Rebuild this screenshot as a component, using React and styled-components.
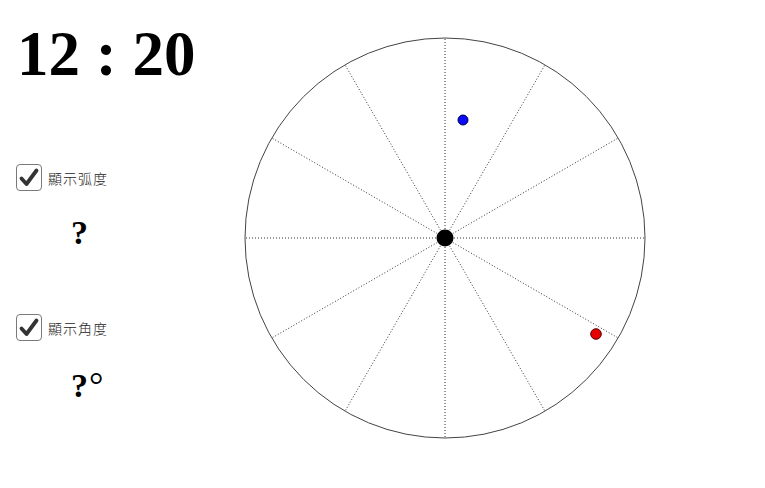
import React from "react";
import styled, { createGlobalStyle } from "styled-components";

const Global = createGlobalStyle`
  html, body { margin: 0; padding: 0; background: #fff; }
  body { font-family: "Liberation Serif", "Times New Roman", serif; }
`;

const Page = styled.div`
  display: flex;
  width: 765px;
  height: 488px;
  overflow: hidden;
  background: #fff;
`;

const LeftPanel = styled.div`
  display: flex;
  flex-direction: column;
  width: 230px;
  flex: none;
`;

const TimeText = styled.div`
  margin-top: 23px;
  padding-left: 17px;
  font-family: "Liberation Serif", "Times New Roman", serif;
  font-weight: bold;
  font-size: 63px;
  line-height: 63px;
  height: 63px;
  color: #000;
  white-space: pre;
`;

const CheckRow = styled.label`
  display: flex;
  align-items: center;
  margin-top: ${(p) => p.$top}px;
  padding-left: 16px;
  height: 27px;
`;

const Box = styled.span`
  box-sizing: border-box;
  width: 26px;
  height: 27px;
  border: 1.5px solid #7a7a7a;
  border-radius: 4px;
  background: #fff;
  display: flex;
  align-items: center;
  justify-content: center;
`;

const Label = styled.span`
  margin-left: 6px;
  font-family: "Noto Sans CJK TC", "Noto Sans CJK SC", sans-serif;
  font-size: 14px;
  font-weight: 300;
  letter-spacing: 1px;
  color: #222;
`;

const Answer = styled.div`
  margin-top: ${(p) => p.$top}px;
  padding-left: 71px;
  font-family: "Liberation Serif", "Times New Roman", serif;
  font-weight: bold;
  font-size: 34px;
  line-height: 34px;
  height: 34px;
  color: #000;
`;

const Degree = styled.span`
  font-weight: normal;
  font-family: "Liberation Serif", serif;
  font-size: 36px;
  margin-left: 1px;
`;

const ClockSvg = styled.svg`
  display: block;
  width: 535px;
  height: 488px;
  flex: none;
`;

const Check = () => (
  <svg width="22" height="22" viewBox="0 0 22 22">
    <path
      d="M3.5 11.5 L8.5 17 L18.5 3.5"
      fill="none"
      stroke="#333"
      strokeWidth="3.8"
      strokeLinecap="round"
      strokeLinejoin="round"
    />
  </svg>
);

const CX = 445;
const CY = 238;
const R = 200;

export default function App() {
  const spokes = [];
  for (let i = 0; i < 12; i++) {
    const a = (i * 30 * Math.PI) / 180;
    spokes.push(
      <line
        key={i}
        x1={CX}
        y1={CY}
        x2={CX + R * Math.sin(a)}
        y2={CY - R * Math.cos(a)}
        stroke="#333"
        strokeWidth="1"
        strokeDasharray="1 2"
      />
    );
  }
  return (
    <>
      <Global />
      <Page>
        <LeftPanel>
          <TimeText>12 : 20</TimeText>
          <CheckRow $top={78}>
            <Box>
              <Check />
            </Box>
            <Label>顯示弧度</Label>
          </CheckRow>
          <Answer $top={25}>?</Answer>
          <CheckRow $top={64}>
            <Box>
              <Check />
            </Box>
            <Label>顯示角度</Label>
          </CheckRow>
          <Answer $top={27}>
            ?<Degree>°</Degree>
          </Answer>
        </LeftPanel>
        <ClockSvg viewBox="230 0 535 488">
          <circle cx={CX} cy={CY} r={R} fill="none" stroke="#444" strokeWidth="1" />
          {spokes}
          <circle cx={CX} cy={CY} r="8.5" fill="#000" />
          <circle cx={463} cy={120} r="5" fill="#0a0aff" stroke="#000044" strokeWidth="1" />
          <circle cx={596} cy={334} r="5.3" fill="#e60000" stroke="#550000" strokeWidth="1" />
        </ClockSvg>
      </Page>
    </>
  );
}
